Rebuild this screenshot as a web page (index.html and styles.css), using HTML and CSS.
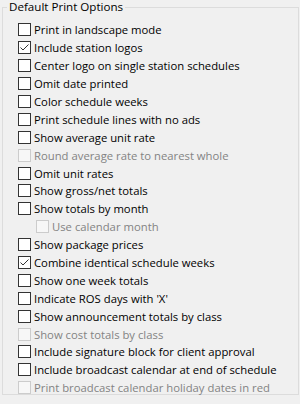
FILE: index.html
```html
<!DOCTYPE html>
<html lang="en">
<head>
    <meta charset="UTF-8">
    <title>Default Print Options</title>
    <link rel="stylesheet" href="styles.css">
</head>
<body>
    <fieldset class="options">
        <legend>Default Print Options</legend>
        <div class="opt"><span class="box"></span>Print in landscape mode</div>
        <div class="opt"><span class="box checked"><svg viewBox="0 0 11 11" width="11" height="11"><path d="M1.5 5.5 L4 8 L9.5 2.5" fill="none" stroke="#333" stroke-width="1"/></svg></span>Include station logos</div>
        <div class="opt"><span class="box"></span>Center logo on single station schedules</div>
        <div class="opt"><span class="box"></span>Omit date printed</div>
        <div class="opt"><span class="box"></span>Color schedule weeks</div>
        <div class="opt"><span class="box"></span>Print schedule lines with no ads</div>
        <div class="opt"><span class="box"></span>Show average unit rate</div>
        <div class="opt disabled"><span class="box"></span>Round average rate to nearest whole</div>
        <div class="opt"><span class="box"></span>Omit unit rates</div>
        <div class="opt"><span class="box"></span>Show gross/net totals</div>
        <div class="opt"><span class="box"></span>Show totals by month</div>
        <div class="opt disabled sub"><span class="box"></span>Use calendar month</div>
        <div class="opt"><span class="box"></span>Show package prices</div>
        <div class="opt"><span class="box checked"><svg viewBox="0 0 11 11" width="11" height="11"><path d="M1.5 5.5 L4 8 L9.5 2.5" fill="none" stroke="#333" stroke-width="1"/></svg></span>Combine identical schedule weeks</div>
        <div class="opt"><span class="box"></span>Show one week totals</div>
        <div class="opt"><span class="box"></span>Indicate ROS days with 'X'</div>
        <div class="opt"><span class="box"></span>Show announcement totals by class</div>
        <div class="opt disabled"><span class="box"></span>Show cost totals by class</div>
        <div class="opt"><span class="box"></span>Include signature block for client approval</div>
        <div class="opt"><span class="box"></span>Include broadcast calendar at end of schedule</div>
        <div class="opt disabled"><span class="box"></span>Print broadcast calendar holiday dates in red</div>
    </fieldset>
</body>
</html>
```

FILE: styles.css
```css
body {
    margin: 0;
    background-color: #f0f0f0;
    font-family: 'Open Sans', 'Noto Sans', sans-serif;
    font-size: 11.3px;
    color: #000000;
    width: 300px;
    height: 404px;
    overflow: hidden;
}

.options {
    margin: 0 1px 3px 2px;
    padding: 0 0 0 15px;
    border: 1px solid #dcdcdc;
    height: 393px;
    box-sizing: content-box;
}

.options legend {
    margin-left: -11px;
    padding: 0 2px;
    line-height: 14px;
    height: 14px;
    font-size: 11.6px;
}

.options legend + .opt {
    margin-top: 7px;
}

.opt {
    display: flex;
    align-items: center;
    height: 17.9px;
    white-space: nowrap;
}

.box {
    width: 11px;
    height: 11px;
    border: 1px solid #333333;
    background-color: #ffffff;
    margin-right: 3px;
    flex: none;
    display: flex;
}

.disabled {
    color: #838383;
}

.disabled .box {
    border-color: #cccccc;
    background-color: #f7f7f7;
}

.sub {
    margin-left: 18px;
}
```
